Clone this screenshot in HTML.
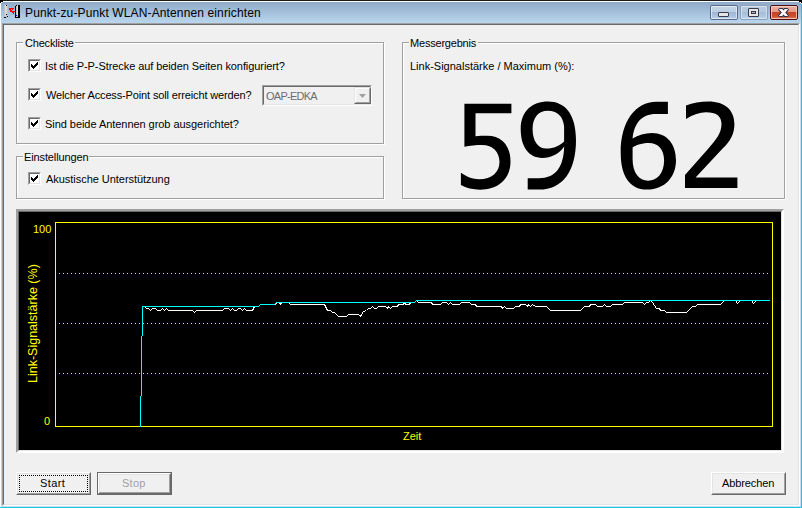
<!DOCTYPE html>
<html><head><meta charset="utf-8">
<style>
*{margin:0;padding:0;box-sizing:border-box}
html,body{width:802px;height:508px;overflow:hidden;background:#f0f0f0}
body{position:relative;font-family:"Liberation Sans",sans-serif;font-size:11px;color:#000}
.a{position:absolute}
.t{position:absolute;white-space:pre;line-height:13px;font-size:11px}
.gb{position:absolute;border:1px solid #a0a0a0}
.gw{position:absolute;border:1px solid #fff}
.cb{position:absolute;width:13px;height:13px;border-top:1px solid #a0a0a0;border-left:1px solid #a0a0a0;border-right:1px solid #fff;border-bottom:1px solid #fff}
.cb i{position:absolute;left:0;top:0;width:11px;height:11px;border-top:1px solid #696969;border-left:1px solid #696969;border-right:1px solid #e3e3e3;border-bottom:1px solid #e3e3e3;background:#fff}
.cb svg{position:absolute;left:1px;top:1px}
.btn{position:absolute;width:75px;height:23px;border-top:1px solid #fff;border-left:1px solid #fff;border-right:1px solid #696969;border-bottom:1px solid #696969}
.btn i{position:absolute;left:0;top:0;right:0;bottom:0;border-top:1px solid #e3e3e3;border-left:1px solid #e3e3e3;border-right:1px solid #a0a0a0;border-bottom:1px solid #a0a0a0}
</style></head><body>

<!-- title bar -->
<div class="a" style="left:0;top:0;width:802px;height:1px;background:#1a1a1a"></div>
<div class="a" style="left:0;top:1px;width:802px;height:1px;background:#fff"></div>
<div class="a" style="left:0;top:2px;width:802px;height:21px;background:linear-gradient(#8eaac8,#a3bed8 45%,#b0cbe4 75%,#bad6ee)"></div>
<!-- outer frame lines -->
<div class="a" style="left:0;top:1px;width:1px;height:507px;background:#fff"></div>
<div class="a" style="left:1px;top:23px;width:1px;height:484px;background:#b9d3ec"></div>
<div class="a" style="left:800px;top:23px;width:1px;height:484px;background:#c8dcf0"></div>
<div class="a" style="left:801px;top:4px;width:1px;height:504px;background:#22c6e8"></div>
<div class="a" style="left:1px;top:506px;width:800px;height:1px;background:#c8dcf0"></div>
<div class="a" style="left:0;top:507px;width:802px;height:1px;background:#1ec8e4"></div>
<div class="a" style="left:0;top:0;width:3px;height:2px;background:#000"></div>
<div class="a" style="left:0;top:2px;width:1px;height:1px;background:#000"></div>
<div class="a" style="left:1px;top:2px;width:1px;height:1px;background:#fff"></div>
<div class="a" style="left:799px;top:0;width:3px;height:2px;background:#000"></div>
<div class="a" style="left:801px;top:2px;width:1px;height:1px;background:#000"></div><div class="a" style="left:801px;top:3px;width:1px;height:1px;background:#a0f0e8"></div>
<div class="a" style="left:800px;top:2px;width:1px;height:1px;background:#fff"></div>
<!-- client edge -->
<div class="a" style="left:2px;top:23px;width:798px;height:483px;border-top:1px solid #a0a0a0;border-left:1px solid #a0a0a0;border-right:1px solid #fff;border-bottom:1px solid #fff">
 <div class="a" style="left:0;top:0;width:796px;height:481px;border-top:1px solid #696969;border-left:1px solid #696969;border-right:1px solid #e3e3e3;border-bottom:1px solid #e3e3e3"></div>
</div>

<!-- title icon -->
<svg class="a" style="left:0;top:0" width="22" height="22" shape-rendering="crispEdges">
<rect x="4" y="5" width="4" height="12" fill="#c4c4c4"/><rect x="5" y="6" width="2" height="10" fill="#d8d8d8"/>
<rect x="5" y="5" width="1" height="1" fill="#fff"/><rect x="6" y="5" width="1" height="1" fill="#000"/>
<rect x="6" y="14" width="1" height="1" fill="#000"/><rect x="7" y="16" width="1" height="1" fill="#000"/><rect x="4" y="17" width="2" height="1" fill="#000"/>
<path fill="#f00" d="M9 8h5v1h-5zM9 9h2v1h-2zM12 9h1v1h-1zM10 10h2v1h-2zM10 11h5v1h-5zM12 12h2v1h-2zM13 13h1v1h-1z"/>
<rect x="15" y="6" width="1" height="12" fill="#000"/><rect x="18" y="5" width="2" height="13" fill="#000"/><rect x="15" y="17" width="5" height="1" fill="#000"/>
<rect x="16" y="5" width="2" height="12" fill="#c8c8c8"/><rect x="17" y="6" width="1" height="9" fill="#e0e0e0"/>
<rect x="16" y="5" width="1" height="1" fill="#000"/><rect x="16" y="15" width="1" height="1" fill="#0000ff"/>
</svg>

<div class="t" style="left:25px;top:6px;font-size:12px;line-height:15px;letter-spacing:.13px;color:#000">Punkt-zu-Punkt WLAN-Antennen einrichten</div>

<!-- caption buttons -->
<div class="a" style="left:710px;top:5px;width:28px;height:15px;border:1px solid #58698a;border-radius:2px;background:linear-gradient(#c4d4e4 0%,#bccee2 45%,#9fb8d6 50%,#b4cce6 100%)">
 <div class="a" style="left:0;top:0;right:0;bottom:0;border:1px solid rgba(255,255,255,.55);border-radius:1px"></div>
 <div class="a" style="left:7px;top:6px;width:11px;height:5px;border:1px solid #3a3a4a;border-radius:1px;background:#e6e6e6"></div>
</div>
<div class="a" style="left:740px;top:5px;width:28px;height:15px;border:1px solid #8aa0bc;border-radius:2px;background:linear-gradient(#b8cce0 0%,#b4c8de 45%,#a6bed8 50%,#b8d0e8 100%)">
 <div class="a" style="left:0;top:0;right:0;bottom:0;border:1px solid rgba(255,255,255,.45);border-radius:1px"></div>
 <div class="a" style="left:7px;top:2px;width:11px;height:9px;border:1px solid #3a3a4c;border-radius:1px;background:#e6e6e4"></div>
 <div class="a" style="left:10px;top:5px;width:5px;height:3px;border:1px solid #3a3048;background:#a8bcd4"></div>
</div>
<div class="a" style="left:770px;top:5px;width:28px;height:15px;border:1px solid #4a0e12;border-radius:2px;background:linear-gradient(#eab0a0 0%,#e49888 45%,#c84424 50%,#cc5030 80%,#e08870 100%)">
 <div class="a" style="left:0;top:0;right:0;bottom:0;border:1px solid rgba(255,220,210,.7);border-radius:1px"></div>
 <svg class="a" style="left:7px;top:2px" width="11" height="9" viewBox="0 0 11 9"><defs><clipPath id="xc"><rect x="1" y="1" width="9" height="7"/></clipPath></defs><path d="M1.6 0 L9.4 9 M9.4 0 L1.6 9" stroke="#34304a" stroke-width="4.8"/><path d="M1.6 0 L9.4 9 M9.4 0 L1.6 9" stroke="#fafafa" stroke-width="2.6" clip-path="url(#xc)"/></svg>
</div>

<!-- group: Checkliste -->
<div class="gw" style="left:17px;top:43px;width:368px;height:102px"></div>
<div class="gb" style="left:16px;top:42px;width:368px;height:102px"></div>
<div class="a" style="left:23px;top:38px;width:52px;height:10px;background:#f0f0f0"></div><div class="t" style="left:25px;top:37px;letter-spacing:-.2px">Checkliste</div>

<div class="cb" style="left:28px;top:59px"><i></i><svg width="9" height="9"><path fill="#000" d="M1 2h0M7 1h1v1h-1zM6 2h2v1h-2zM1 3h1v1h-1zM5 3h3v1h-3zM1 4h2v1h-2zM4 4h3v1h-3zM1 5h5v1h-5zM2 6h3v1h-3zM3 7h1v1h-1z"/></svg></div>
<div class="t" style="left:45px;top:60px;letter-spacing:-.08px">Ist die P-P-Strecke auf beiden Seiten konfiguriert?</div>

<div class="cb" style="left:28px;top:88px"><i></i><svg width="9" height="9"><path fill="#000" d="M7 1h1v1h-1zM6 2h2v1h-2zM1 3h1v1h-1zM5 3h3v1h-3zM1 4h2v1h-2zM4 4h3v1h-3zM1 5h5v1h-5zM2 6h3v1h-3zM3 7h1v1h-1z"/></svg></div>
<div class="t" style="left:46px;top:89px;letter-spacing:-.14px">Welcher Access-Point soll erreicht werden?</div>

<!-- combo -->
<div class="a" style="left:262px;top:85px;width:110px;height:21px;border-top:1px solid #a0a0a0;border-left:1px solid #a0a0a0;border-right:1px solid #fff;border-bottom:1px solid #fff">
 <div class="a" style="left:0;top:0;width:108px;height:19px;border-top:1px solid #696969;border-left:1px solid #696969;border-right:1px solid #e3e3e3;border-bottom:1px solid #e3e3e3;background:#f0f0f0"></div>
 <div class="a" style="left:91px;top:1px;width:17px;height:17px;border-top:1px solid #e3e3e3;border-left:1px solid #e3e3e3;border-right:1px solid #696969;border-bottom:1px solid #696969">
  <div class="a" style="left:0;top:0;width:15px;height:15px;border-top:1px solid #fff;border-left:1px solid #fff;border-right:1px solid #a0a0a0;border-bottom:1px solid #a0a0a0"></div>
  <svg class="a" style="left:4px;top:6px" width="8" height="5"><path d="M0 0h7l-3.5 4z" fill="#a0a0a0"/></svg>
 </div>
</div>
<div class="t" style="left:266px;top:90px;letter-spacing:-.75px;color:#6d6d6d">OAP-EDKA</div>

<div class="cb" style="left:28px;top:117px"><i></i><svg width="9" height="9"><path fill="#000" d="M7 1h1v1h-1zM6 2h2v1h-2zM1 3h1v1h-1zM5 3h3v1h-3zM1 4h2v1h-2zM4 4h3v1h-3zM1 5h5v1h-5zM2 6h3v1h-3zM3 7h1v1h-1z"/></svg></div>
<div class="t" style="left:45px;top:118px;letter-spacing:-.05px">Sind beide Antennen grob ausgerichtet?</div>

<!-- group: Einstellungen -->
<div class="gw" style="left:17px;top:157px;width:368px;height:43px"></div>
<div class="gb" style="left:16px;top:156px;width:368px;height:43px"></div>
<div class="a" style="left:23px;top:152px;width:66px;height:10px;background:#f0f0f0"></div><div class="t" style="left:24px;top:151px;letter-spacing:-.12px">Einstellungen</div>
<div class="cb" style="left:28px;top:172px"><i></i><svg width="9" height="9"><path fill="#000" d="M7 1h1v1h-1zM6 2h2v1h-2zM1 3h1v1h-1zM5 3h3v1h-3zM1 4h2v1h-2zM4 4h3v1h-3zM1 5h5v1h-5zM2 6h3v1h-3zM3 7h1v1h-1z"/></svg></div>
<div class="t" style="left:46px;top:173px;letter-spacing:-.04px">Akustische Unterstützung</div>

<!-- group: Messergebnis -->
<div class="gw" style="left:403px;top:43px;width:383px;height:157px"></div>
<div class="gb" style="left:402px;top:42px;width:383px;height:157px"></div>
<div class="a" style="left:409px;top:38px;width:69px;height:10px;background:#f0f0f0"></div><div class="t" style="left:410px;top:37px;letter-spacing:-.2px">Messergebnis</div>
<div class="t" style="left:410px;top:60px">Link-Signalstärke / Maximum (%):</div>

<svg class="a" style="left:0;top:0" width="802" height="508" fill="#000" fill-rule="evenodd">
<path d="M464.4,103.7 L511.4,103.7 L511.4,113.3 L475.5,113.3 L475.5,136.2 C479,135.9 483,135.8 487,135.8 C502,135.8 510.5,146 510.5,161.8 C510.5,178 499,189.7 480,189.7 C473,189.7 466,188 460.9,185.1 L460.9,172.8 C466,176.5 473,179.3 479,179.3 C492,179.3 499.5,172 499.5,162 C499.5,152 493,144.9 482,144.9 C476,144.9 470,145.5 464.4,146.8 Z"/>
<path d="M548.1,101.4 C565,101.4 576,114 576,140 C576,171 563,189.6 539,189.6 L527.7,189.6 L527.7,178.2 L539,178.2 C555,178.2 563.5,168 564.2,146.5 C559,154 551,158 542.4,158 C528,158 520.7,146 520.7,129.1 C520.7,111 532,101.4 548.1,101.4 Z M548,110.8 C538,110.8 532.6,118 532.6,129.1 C532.6,141 538,148.6 546.2,148.6 C554,148.6 560,145.5 564.1,141.5 L564.1,126.3 C563,116 557,110.8 548,110.8 Z"/>
<path d="M667.9,101.8 L667.9,114 L656,114 C641,114 634,124 632.6,138.6 C638,135 645,132.9 651.9,132.9 C667,132.9 676,144 676,160.3 C676,177 665,189.6 647.1,189.6 C629,189.6 620.7,175 620.7,152.7 C620.7,121 636,101.8 656,101.8 Z M649,142.9 C641,142.9 635,145.5 632.6,147.5 L632.6,159 C632.6,173 639,180.7 648.1,180.7 C657.5,180.7 664.1,173 664.1,160.3 C664.1,149 658,142.9 649,142.9 Z"/>
<path d="M686,105.6 C693,102.5 700,101.4 708.6,101.4 C725,101.4 734.4,110 734.4,124 C734.4,134 730,142 722.6,148.4 L695.6,177.4 L737.4,177.4 L737.4,188 L685,188 L685,175 L708.4,148.4 C716,140 721.5,133 721.5,124 C721.5,116 716,112.3 706,112.3 C700,112.3 693,114.5 686,119 Z"/>
</svg>

<!-- graph panel -->
<div class="a" style="left:16px;top:209px;width:768px;height:244px;border-top:1px solid #a0a0a0;border-left:1px solid #a0a0a0;border-right:1px solid #fff;border-bottom:1px solid #fff">
 <div class="a" style="left:0;top:0;width:766px;height:242px;border-top:1px solid #a0a0a0;border-left:1px solid #a0a0a0;border-right:1px solid #fff;border-bottom:1px solid #fff">
  <div class="a" style="left:0;top:0;width:764px;height:240px;border-top:1px solid #696969;border-left:1px solid #696969;border-right:1px solid #e3e3e3;border-bottom:1px solid #e3e3e3;background:#000"></div>
 </div>
</div>

<svg class="a" style="left:0;top:0" width="802" height="508" shape-rendering="crispEdges">
 <rect x="55.5" y="222.5" width="717" height="204" fill="none" stroke="#ffff00" stroke-width="1"/>
 <line x1="59" y1="273.5" x2="768" y2="273.5" stroke="#ffff00" stroke-dasharray="1 3"/>
 <line x1="59" y1="323.5" x2="768" y2="323.5" stroke="#ffff00" stroke-dasharray="1 3"/>
 <line x1="59" y1="373.5" x2="768" y2="373.5" stroke="#ffff00" stroke-dasharray="1 3"/>
<polyline points="145.5,307.5 146.5,308.5 148.5,308.5 150.5,310.5 152.5,308.5 155.5,308.5 157.5,310.5 160.5,310.5 162.5,308.5 164.5,310.5 166.5,308.5 168.5,310.5 192.5,310.5 194.5,312.5 196.5,310.5 222.5,310.5 224.5,308.5 228.5,308.5 230.5,310.5 232.5,308.5 234.5,310.5 236.5,310.5 238.5,308.5 240.5,308.5 242.5,310.5 244.5,308.5 246.5,310.5 252.5,310.5 254.5,306.5 258.5,306.5 260.5,304.5 275.5,304.5 277.5,302.5 279.5,302.5 280.5,304.5 282.5,302.5 288.5,302.5 290.5,304.5 324.5,304.5 327.5,310.5 330.5,310.5 332.5,312.5 334.5,312.5 338.5,316.5 346.5,316.5 348.5,314.5 358.5,314.5 360.5,316.5 361.5,314.5 363.5,311.5 366.5,310.5 368.5,308.5 370.5,308.5 372.5,306.5 374.5,308.5 376.5,308.5 378.5,306.5 385.5,306.5 387.5,308.5 388.5,306.5 390.5,308.5 392.5,306.5 397.5,306.5 398.5,304.5 403.5,304.5 404.5,302.5 405.5,304.5 409.5,304.5 410.5,302.5 414.5,302.5 416.5,300.5 418.5,302.5 431.5,302.5 432.5,304.5 440.5,304.5 442.5,302.5 446.5,302.5 448.5,304.5 450.5,302.5 452.5,304.5 459.5,304.5 461.5,302.5 469.5,302.5 471.5,304.5 475.5,304.5 476.5,306.5 501.5,306.5 502.5,308.5 504.5,306.5 506.5,308.5 513.5,308.5 515.5,306.5 519.5,306.5 520.5,304.5 525.5,304.5 527.5,306.5 528.5,304.5 530.5,306.5 532.5,304.5 535.5,306.5 546.5,306.5 550.5,310.5 580.5,310.5 584.5,306.5 589.5,306.5 590.5,304.5 595.5,304.5 597.5,306.5 602.5,306.5 604.5,304.5 606.5,306.5 610.5,306.5 612.5,304.5 622.5,304.5 624.5,302.5 642.5,302.5 644.5,304.5 646.5,302.5 648.5,302.5 650.5,300.5 652.5,302.5 656.5,308.5 659.5,308.5 660.5,310.5 664.5,310.5 666.5,312.5 686.5,312.5 692.5,306.5 695.5,306.5 697.5,304.5 720.5,304.5 724.5,300.5 735.5,300.5 737.5,303.5 740.5,300.5 751.5,300.5 753.5,303.5 756.5,300.5 769.5,300.5" fill="none" stroke="#ffffff" stroke-width="1" stroke-linejoin="bevel"/>
<polyline points="140.5,426.5 140.5,396.5 141.5,395.5 141.5,336.5 142.5,335.5 142.5,306.5 258.5,306.5 260.5,304.5 274.5,304.5 276.5,302.5 414.5,302.5 416.5,300.5 769.5,300.5" fill="none" stroke="#00ffff" stroke-width="1" stroke-linejoin="bevel"/>
</svg>
<div class="t" style="left:33px;top:223px;color:#ffff00">100</div>
<div class="t" style="left:44px;top:415px;color:#ffff00">0</div>
<div class="t" style="left:403px;top:430px;color:#ffff00">Zeit</div>
<div class="a" style="left:26px;top:383px;width:0;height:0">
 <div class="t" style="left:0;top:0;font-size:12.5px;line-height:14px;color:#ffff00;transform-origin:0 0;transform:rotate(-90deg)">Link-Signalstärke (%)</div>
</div>

<!-- buttons -->
<div class="btn" style="left:16px;top:472px"><i></i>
 <div class="a" style="left:2px;top:2px;width:69px;height:17px;border:1px dotted #000"></div>
</div>
<div class="t" style="left:40px;top:477px;letter-spacing:.4px">Start</div>
<div class="a" style="left:97px;top:472px;width:75px;height:23px;border:1px solid #696969">
 <div class="btn" style="left:0;top:0;width:73px;height:21px;border-right-color:#696969;border-bottom-color:#696969"><i></i></div>
</div>
<div class="t" style="left:122px;top:477px;letter-spacing:.25px;color:#a0a0a0">Stop</div>
<div class="btn" style="left:711px;top:472px"><i></i></div>
<div class="t" style="left:722px;top:477px;letter-spacing:-.1px">Abbrechen</div>

</body></html>
